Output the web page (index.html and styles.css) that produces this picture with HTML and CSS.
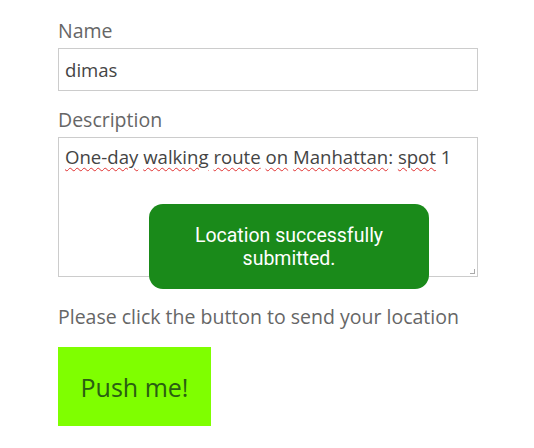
FILE: index.html
```html
<!DOCTYPE html>
<html lang="en">
<head>
    <meta charset="UTF-8">
    <meta name="viewport" content="width=device-width, initial-scale=1.0">
    <title>Send Location</title>
    <link rel="stylesheet" href="styles.css">
</head>
<body>
    <div class="container">
        <form id="locationForm">
            <label for="name">Name</label>
            <input type="text" id="name" name="name" value="dimas">

            <label for="description">Description</label>
            <div class="textarea" id="description">
                <span class="typo">One-day</span> <span class="typo">walking</span> <span class="typo">route</span> <span class="typo">on</span> <span class="typo">Manhattan</span>: <span class="typo">spot</span> 1
                <span class="grip"></span>
            </div>

            <p class="hint">Please click the button to send your location</p>
            <button type="button">Push me!</button>
        </form>

        <div class="toast">Location successfully<br>submitted.</div>
    </div>
</body>
</html>
```

FILE: styles.css
```css
body {
    font-family: "Open Sans", Arial, sans-serif;
    background-color: #fff;
    margin: 0;
    padding: 0;
}
.container {
    position: relative;
    width: 420px;
    padding: 18px 0 0 58px;
}
form {
    display: flex;
    flex-direction: column;
    align-items: flex-start;
}
label {
    font-size: 19.5px;
    line-height: 26px;
    color: #666;
    margin-bottom: 4px;
}
input, .textarea {
    box-sizing: border-box;
    width: 420px;
    padding: 0 6px;
    font-family: "Open Sans", Arial, sans-serif;
    font-size: 18.6px;
    color: #444;
    border: 1px solid #ccc;
    background: #fff;
}
input {
    height: 43px;
    margin-bottom: 16px;
}
.textarea {
    position: relative;
    height: 140px;
    padding-top: 6px;
    line-height: 26px;
}
.typo {
    text-decoration: underline wavy #e03030;
    text-decoration-thickness: 1px;
    text-underline-offset: 3px;
}
.grip {
    position: absolute;
    right: 2px;
    bottom: 2px;
    width: 4px;
    height: 4px;
    border-right: 1px solid #aaa;
    border-bottom: 1px solid #aaa;
}
.hint {
    font-size: 19.5px;
    line-height: 26px;
    color: #666;
    margin: 27px 0 17px;
}
button {
    width: 153px;
    height: 79px;
    padding: 0;
    background-color: #7fff00;
    color: #2a5e12;
    font-family: "Open Sans", Arial, sans-serif;
    font-size: 25px;
    border: none;
    cursor: pointer;
}
.toast {
    position: absolute;
    left: 149px;
    top: 204px;
    width: 280px;
    height: 85px;
    box-sizing: border-box;
    padding-top: 20px;
    border-radius: 14px;
    background-color: #1a8a1a;
    color: #fff;
    font-family: Roboto, Arial, sans-serif;
    font-size: 19.5px;
    line-height: 23px;
    text-align: center;
}
```
